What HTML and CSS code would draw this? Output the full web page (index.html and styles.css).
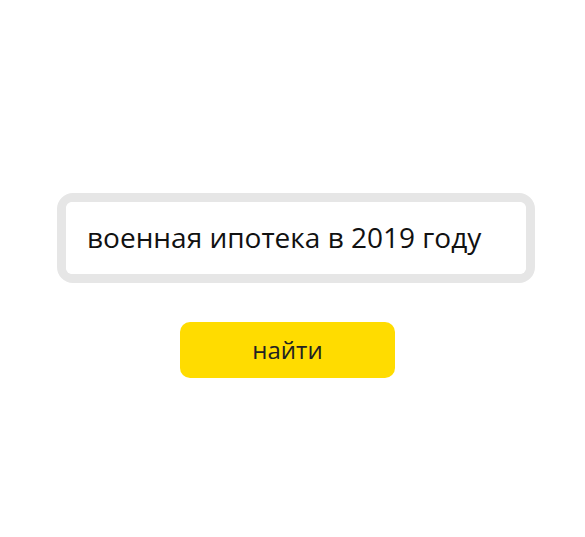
FILE: index.html
```html
<!DOCTYPE html>
<html lang="ru">
<head>
<meta charset="utf-8">
<link rel="stylesheet" href="styles.css">
</head>
<body>
<div class="page">
  <div class="search">
    <div class="field">военная ипотека в 2019 году</div>
  </div>
  <button class="btn">найти</button>
</div>
</body>
</html>
```

FILE: styles.css
```css
html, body {
  margin: 0;
  padding: 0;
  background: #ffffff;
}
body {
  font-family: "Open Sans", "Noto Sans", sans-serif;
  color: #111;
}
.page {
  width: 585px;
  height: 537px;
  display: flex;
  flex-direction: column;
  align-items: flex-start;
  padding-top: 193px;
  box-sizing: border-box;
}
.search {
  margin-left: 57px;
  width: 478px;
  height: 90px;
  box-sizing: border-box;
  border: 9px solid #e6e6e6;
  border-radius: 16px;
  background: #fff;
}
.field {
  height: 100%;
  border-radius: 6px;
  background: #fff;
  display: flex;
  align-items: center;
  padding-left: 21px;
  padding-bottom: 2px;
  box-sizing: border-box;
  font-size: 28px;
  color: #111;
  white-space: nowrap;
}
.btn {
  margin-top: 39px;
  margin-left: 180px;
  width: 215px;
  height: 56px;
  border: none;
  border-radius: 10px;
  background: #ffdc00;
  font-family: "Open Sans", "Noto Sans", sans-serif;
  font-size: 24px;
  color: #222;
  padding: 0 0 2px 0;
}
```
